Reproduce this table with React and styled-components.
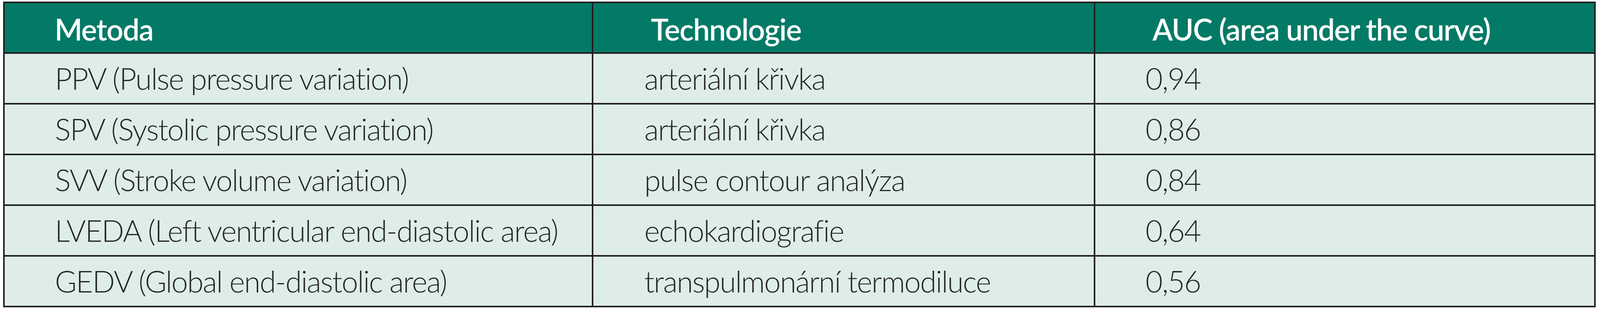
import React from "react";
import styled, { createGlobalStyle } from "styled-components";

const GlobalStyle = createGlobalStyle`
 html, body {
  margin: 0;
  padding: 0;
  background: #ffffff;
 }
 body {
  font-family: "Lato", "Noto Sans", "Liberation Sans", sans-serif;
 }
`;

// horizontal sizes follow the reference width (4891px), vertical ones are plain px
const vw = (px) => `${((px / 4891) * 100).toFixed(4)}vw`;

const Page = styled.div`
 padding: 4px 0 0 ${vw(9)};
`;

const Table = styled.table`
 border-collapse: separate;
 border-spacing: 0;
 width: ${vw(4864)};
 table-layout: fixed;
 border-right: 4px solid #231f20;
 border-bottom: 4px solid #231f20;
`;

const HeadCell = styled.th`
 box-sizing: border-box;
 height: 130px;
 vertical-align: top;
 background-color: #037a66;
 color: #ffffff;
 border-top: 4px solid #231f20;
 border-left: 4px solid #231f20;
 padding: 29px 0 0 ${(p) => vw(p.$pad)};
 text-align: left;
 font-size: 76px;
 font-weight: 600;
 letter-spacing: -1.6px;
 line-height: 1;
 white-space: nowrap;
`;

const Cell = styled.td`
 box-sizing: border-box;
 height: 130px;
 vertical-align: top;
 background-color: #deede8;
 color: #262626;
 border-top: 4px solid #231f20;
 border-left: 4px solid #231f20;
 padding: 25px 0 0 ${(p) => vw(p.$pad)};
 font-size: 76px;
 font-weight: 300;
 letter-spacing: -2px;
 line-height: 1;
 white-space: nowrap;
`;

const columns = [
 { title: "Metoda", width: 1800, headPad: 153, pad: 154 },
 { title: "Technologie", width: 1534, headPad: 176, pad: 156 },
 { title: "AUC (area under the curve)", width: 1530, headPad: 175, pad: 154 },
];

const rows = [
 ["PPV (Pulse pressure variation)", "arteriální křivka", "0,94"],
 ["SPV (Systolic pressure variation)", "arteriální křivka", "0,86"],
 ["SVV (Stroke volume variation)", "pulse contour analýza", "0,84"],
 ["LVEDA (Left ventricular end-diastolic area)", "echokardiografie", "0,64"],
 ["GEDV (Global end-diastolic area)", "transpulmonární termodiluce", "0,56"],
];

export default function App() {
 return (
  <Page>
   <GlobalStyle />
   <Table>
    <colgroup>
     {columns.map((c) => (
      <col key={c.title} style={{ width: vw(c.width) }} />
     ))}
    </colgroup>
    <thead>
     <tr>
      {columns.map((c) => (
       <HeadCell key={c.title} $pad={c.headPad}>
        {c.title}
       </HeadCell>
      ))}
     </tr>
    </thead>
    <tbody>
     {rows.map((row) => (
      <tr key={row[0]}>
       {row.map((value, i) => (
        <Cell key={i} $pad={columns[i].pad}>
         {value}
        </Cell>
       ))}
      </tr>
     ))}
    </tbody>
   </Table>
  </Page>
 );
}
